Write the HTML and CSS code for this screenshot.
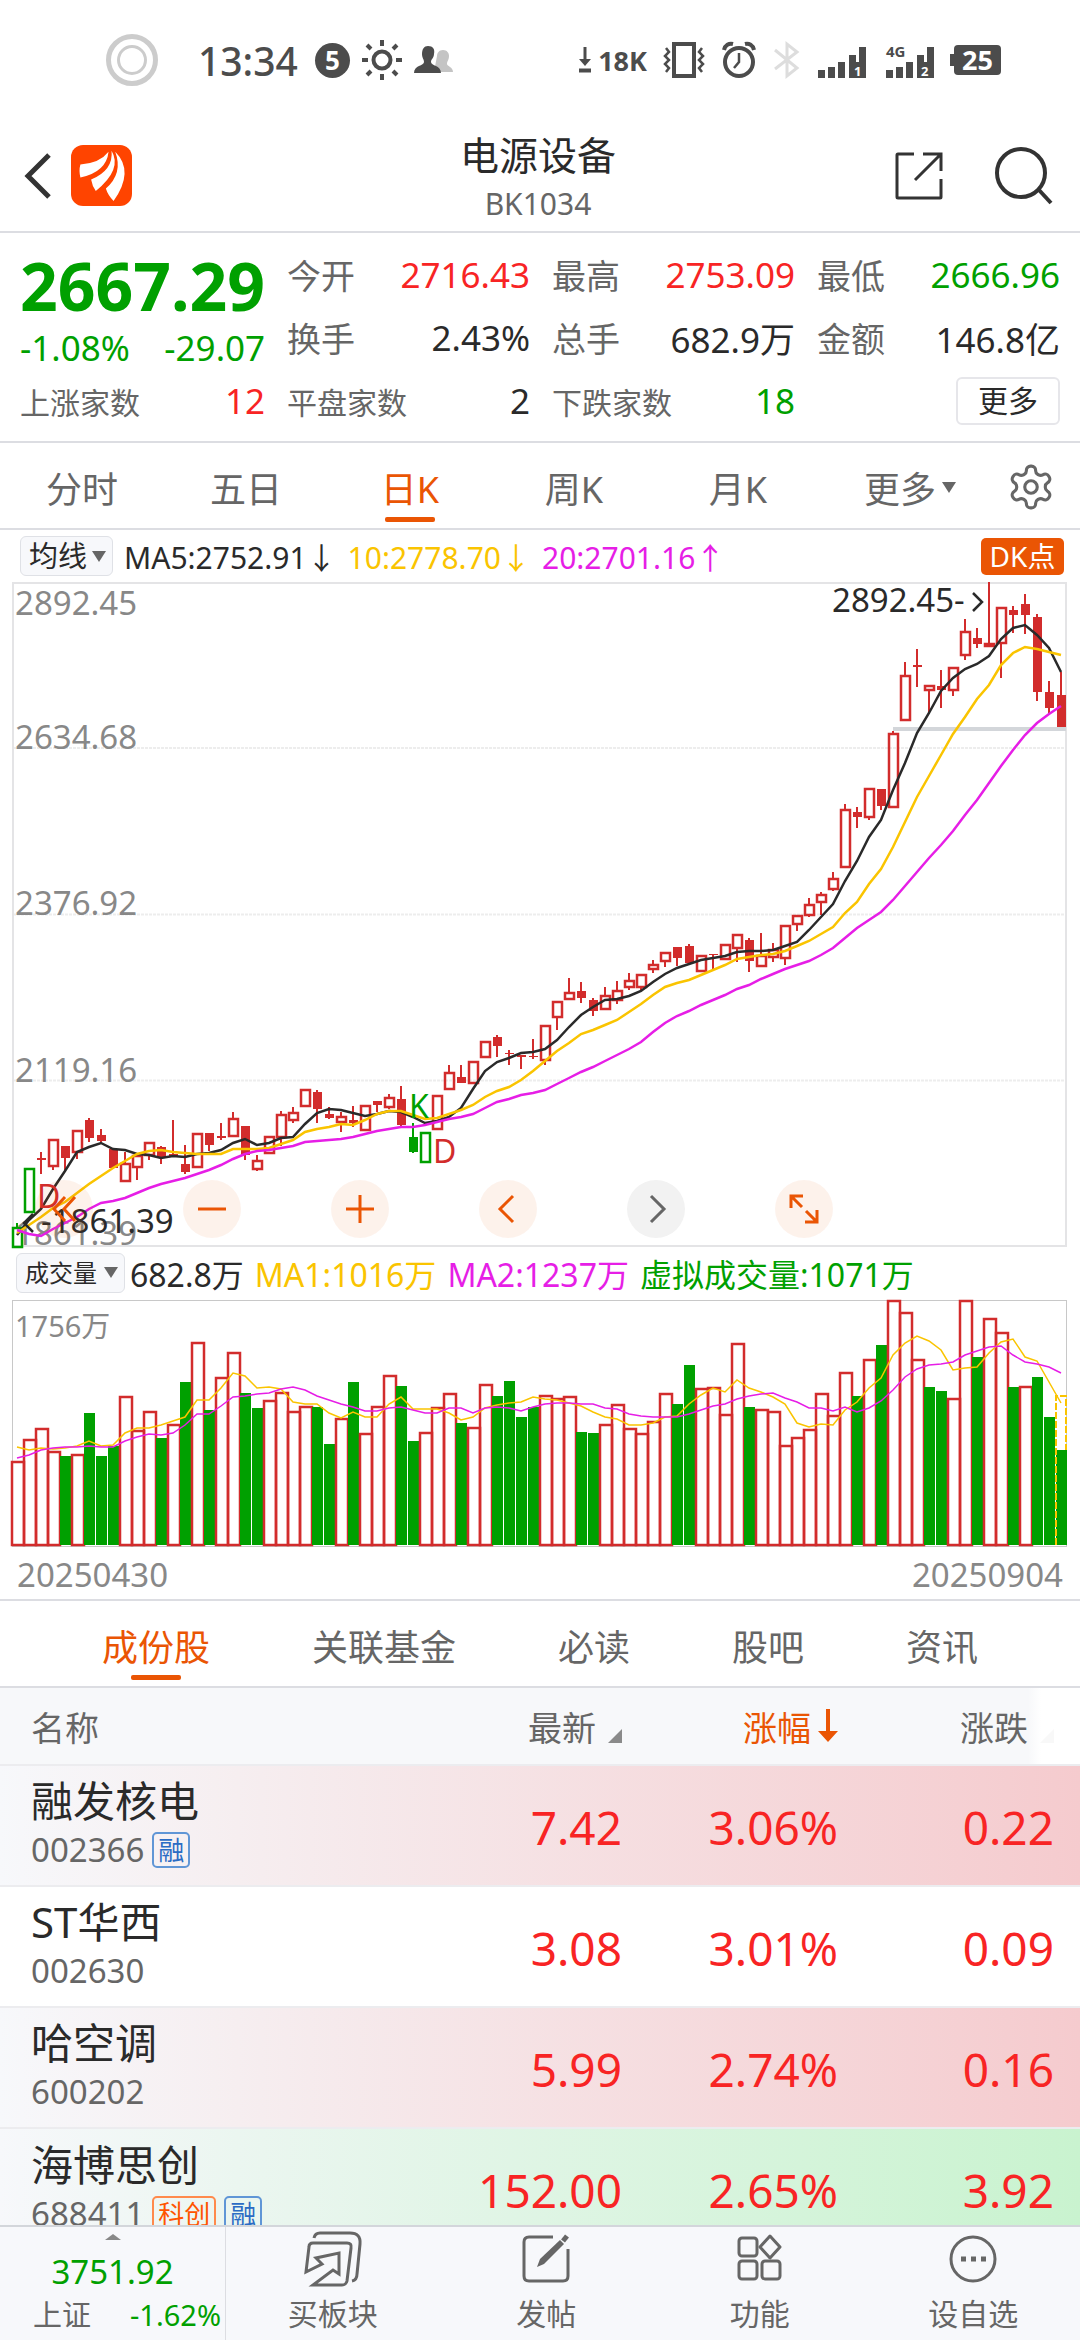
FILE: index.html
```html
<!DOCTYPE html>
<html lang="zh-CN">
<head>
    <meta charset="UTF-8">
    <meta name="viewport" content="width=device-width, initial-scale=1.0">
    <title>电源设备 BK1034</title>
    <link rel="stylesheet" href="styles.css">
</head>
<body>
    <div class="status-bar">
        <div class="status-left">
            <svg class="rings" width="52" height="52" viewBox="0 0 52 52" fill="none" stroke="#ccc"><circle cx="26" cy="26" r="23.5" stroke-width="5"/><circle cx="26" cy="26" r="13.5" stroke-width="3"/></svg>
            <span class="clock">13:34</span>
            <span class="count">5</span>
            <svg width="40" height="40" viewBox="0 0 40 40" fill="none" stroke="#4c4c4c" stroke-width="4"><circle cx="20" cy="20" r="8.5"/><path d="M20 0v6M20 34v6M0 20h6M34 20h6M5 5l4 4M31 31l4 4M5 35l4-4M31 9l4-4"/></svg>
            <svg width="40" height="28" viewBox="0 0 40 28"><path d="M29 4c4 0 6 3 6 6 0 4-2 5-2 8 0 2 6 3 6 8H20l3-16c0-3 2-6 6-6z" fill="#c4c4c4"/><path d="M14 0c5 0 7 3 6 8 0 4-3 5-3 8 0 4 10 3 10 11H0c0-8 10-7 10-11 0-3-2-4-2-8 0-5 2-8 6-8z" fill="#4c4c4c"/></svg>
        </div>
        <div class="status-right">
            <svg width="12" height="26" viewBox="0 0 12 26" fill="none" stroke="#4c4c4c"><path d="M6 0v14" stroke-width="3"/><path d="M0 12l6 7 6-7z" fill="#4c4c4c" stroke="none"/><path d="M0 23.500h12" stroke-width="4"/></svg>
            <span class="speed">18K</span>
            <svg class="vibrate" width="40" height="36" viewBox="0 0 40 36" fill="none" stroke="#4c4c4c"><path d="M10 2h20v32H10z" stroke-width="4"/><path d="M2 6l3 4-4 4 4 4-4 4 4 4-3 4M38 6l-3 4 4 4-4 4 4 4-4 4 3 4" stroke-width="2.500"/></svg>
            <svg class="alarm" width="34" height="36" viewBox="0 0 34 36" fill="none" stroke="#4c4c4c"><circle cx="17" cy="20" r="14" stroke-width="4"/><path d="M17 11v9l-5 6" stroke-width="2.500"/><path d="M2 8c1-5 5-7 9-6M32 8c-1-5-5-7-9-6" stroke-width="4"/></svg>
            <svg class="bluetooth" width="26" height="36" viewBox="0 0 26 36" fill="none" stroke="#ddd" stroke-width="3"><path d="M1 8l22 18-10 8V2l10 8L1 27"/></svg>
            <svg class="signal" width="48" height="38" viewBox="0 0 48 38" fill="#4c4c4c"><path d="M0 29h7v8H0zM10 26h7v11h-7zM20 21h7v16h-7zM31 14h7v7h3V6h7v31H31z"/><text x="36" y="35" class="sim">1</text></svg>
            <svg class="signal" width="48" height="38" viewBox="0 0 48 38" fill="#4c4c4c"><path d="M0 29h7v8H0zM10 26h7v11h-7zM20 21h7v16h-7zM31 14h7v7h3V6h7v31H31z"/><text x="35" y="35" class="sim">2</text><text x="0" y="16" class="net">4G</text></svg>
            <span class="battery">25</span>
        </div>
    </div>

    <header class="header">
        <div class="header-left">
            <button class="icon-button" aria-label="返回"><svg width="28" height="46" viewBox="0 0 28 46" fill="none" stroke="#333" stroke-width="5"><path d="M25 2L4 23l21 21"/></svg></button>
            <a href="#" class="logo" aria-label="首页"><svg width="61" height="61" viewBox="0 0 182 182"><rect width="182" height="182" rx="36" fill="#ff4400"/><g fill="#fff"><path d="M28 58Q86 54 112 20Q106 80 28 97Q23 76 28 58z"/><path d="M121 17Q154 72 74 137Q63 122 60 103Q127 75 121 17z"/><path d="M132 20Q190 78 127 167Q110 150 104 130Q156 84 132 20z"/></g></svg></a>
        </div>
        <div class="header-title">
            <h1>电源设备</h1>
            <p>BK1034</p>
        </div>
        <div class="header-right">
            <button class="icon-button" aria-label="分享"><svg width="50" height="50" viewBox="0 0 50 50" fill="none" stroke="#333" stroke-width="3"><path d="M20 3H4q-1 0-1 1v42q0 1 1 1h42q1 0 1-1V28M29 3h18v17M47 3L21 29"/></svg></button>
            <button class="icon-button" aria-label="搜索"><svg width="58" height="58" viewBox="0 0 58 58" fill="none" stroke="#333" stroke-width="4"><circle cx="27" cy="26" r="24"/><path d="M45 43l12 13"/></svg></button>
        </div>
    </header>

    <section class="quote">
        <div class="quote-main">
            <strong class="price">2667.29</strong>
            <div class="change"><span>-1.08%</span><span>-29.07</span></div>
        </div>
        <div class="stat"><span>今开</span><b class="up">2716.43</b></div>
        <div class="stat"><span>最高</span><b class="up">2753.09</b></div>
        <div class="stat"><span>最低</span><b class="down">2666.96</b></div>
        <div class="stat"><span>换手</span><b>2.43%</b></div>
        <div class="stat"><span>总手</span><b>682.9万</b></div>
        <div class="stat"><span>金额</span><b>146.8亿</b></div>
        <div class="stat small"><span>上涨家数</span><b class="up">12</b></div>
        <div class="stat small"><span>平盘家数</span><b>2</b></div>
        <div class="stat small"><span>下跌家数</span><b class="down">18</b></div>
        <div class="stat more"><button class="more-button">更多</button></div>
    </section>

    <nav class="period-tabs">
        <button class="tab">分时</button>
        <button class="tab">五日</button>
        <button class="tab active">日K</button>
        <button class="tab">周K</button>
        <button class="tab">月K</button>
        <button class="tab tab-more">更多<i class="caret"></i></button>
        <button class="tab tab-gear" aria-label="设置"><svg width="50" height="50" viewBox="0 0 24 24" fill="none" stroke="#666" stroke-width="1.500"><path d="M12.220 2h-.44a2 2 0 0 0-2 2v.18a2 2 0 0 1-1 1.730l-.43.25a2 2 0 0 1-2 0l-.15-.08a2 2 0 0 0-2.730.73l-.22.38a2 2 0 0 0 .73 2.730l.15.1a2 2 0 0 1 1 1.720v.51a2 2 0 0 1-1 1.740l-.15.09a2 2 0 0 0-.73 2.730l.22.38a2 2 0 0 0 2.730.73l.15-.08a2 2 0 0 1 2 0l.43.25a2 2 0 0 1 1 1.730V20a2 2 0 0 0 2 2h.44a2 2 0 0 0 2-2v-.18a2 2 0 0 1 1-1.730l.43-.25a2 2 0 0 1 2 0l.15.08a2 2 0 0 0 2.730-.73l.22-.39a2 2 0 0 0-.73-2.730l-.15-.08a2 2 0 0 1-1-1.740v-.5a2 2 0 0 1 1-1.740l.15-.09a2 2 0 0 0 .73-2.730l-.22-.38a2 2 0 0 0-2.730-.73l-.15.08a2 2 0 0 1-2 0l-.43-.25a2 2 0 0 1-1-1.730V4a2 2 0 0 0-2-2z"/><circle cx="12" cy="12" r="3"/></svg></button>
    </nav>

    <section class="charts">
        <div class="legend">
            <label class="picker"><select aria-label="主图指标"><option>均线</option></select><i class="caret"></i></label>
            <span class="ma5">MA5:2752.91↓</span>
            <span class="ma10">10:2778.70↓</span>
            <span class="ma20">20:2701.16↑</span>
            <button class="dk-button">DK点</button>
        </div>
        <div class="k-chart">
            <svg id="k-chart" viewBox="13 582 1054 665"></svg>
            <div class="chart-tools">
                <button class="tool" aria-label="最早"><svg width="30" height="30" viewBox="0 0 30 30"><path d="M16 3L5 15l11 12M26 3L15 15l11 12"/></svg></button>
                <button class="tool" aria-label="缩小"><svg width="30" height="30" viewBox="0 0 30 30"><path d="M1 15h28"/></svg></button>
                <button class="tool" aria-label="放大"><svg width="30" height="30" viewBox="0 0 30 30"><path d="M1 15h28M15 1v28"/></svg></button>
                <button class="tool" aria-label="左移"><svg width="30" height="30" viewBox="0 0 30 30"><path d="M20 2L7 15l13 13"/></svg></button>
                <button class="tool gray" aria-label="右移"><svg width="30" height="30" viewBox="0 0 30 30"><path d="M10 2l13 13-13 13"/></svg></button>
                <button class="tool" aria-label="全屏"><svg width="30" height="30" viewBox="0 0 30 30"><path d="M2 14V2h12M2 2l11 11M28 16v12H16M28 28L17 17"/></svg></button>
            </div>
        </div>
        <div class="legend legend-volume">
            <label class="picker"><select aria-label="副图指标"><option>成交量</option></select><i class="caret"></i></label>
            <span>682.8万</span>
            <span class="ma10">MA1:1016万</span>
            <span class="ma20">MA2:1237万</span>
            <span class="down">虚拟成交量:1071万</span>
        </div>
        <svg id="volume-chart" viewBox="13 1300 1054 247"></svg>
        <div class="dates"><span>20250430</span><span>20250904</span></div>
    </section>

    <nav class="info-tabs">
        <button class="tab active">成份股</button>
        <button class="tab">关联基金</button>
        <button class="tab">必读</button>
        <button class="tab">股吧</button>
        <button class="tab">资讯</button>
    </nav>

    <main class="list">
        <table class="stocks">
            <thead>
                <tr>
                    <th>名称</th>
                    <th><span>最新<i class="corner"></i></span></th>
                    <th class="sorted"><span>涨幅<svg width="20" height="34" viewBox="0 0 20 34"><path d="M8 0h4v22h8L10 33 0 22h8z"/></svg></span></th>
                    <th class="faded"><span>涨跌<i class="corner"></i></span></th>
                </tr>
            </thead>
            <tbody>
                <tr class="rise">
                    <td><div class="name">融发核电</div><div class="code">002366<em>融</em></div></td>
                    <td>7.42</td><td>3.06%</td><td>0.22</td>
                </tr>
                <tr>
                    <td><div class="name">ST华西</div><div class="code">002630</div></td>
                    <td>3.08</td><td>3.01%</td><td>0.09</td>
                </tr>
                <tr class="rise">
                    <td><div class="name">哈空调</div><div class="code">600202</div></td>
                    <td>5.99</td><td>2.74%</td><td>0.16</td>
                </tr>
                <tr class="fall">
                    <td><div class="name">海博思创</div><div class="code">688411<em class="star">科创</em><em>融</em></div></td>
                    <td>152.00</td><td>2.65%</td><td>3.92</td>
                </tr>
            </tbody>
        </table>
    </main>

    <footer class="bottom-bar">
        <button class="index">
            <i class="caret-up"></i>
            <span class="index-value">3751.92</span>
            <span class="index-row"><span>上证</span><span class="down">-1.62%</span></span>
        </button>
        <a href="#" class="action">
            <svg width="62" height="56" viewBox="0 0 62 56"><path d="M4 41L7 16q0-4 4-4h34q5 0 4 5l-4 33q-1 4-5 4H11l20-15 6 4V22l-23 5 6 6z"/><path d="M12 7q1-5 6-5h30q11 0 10 11l-3 30q0 6-5 7"/></svg>
            买板块
        </a>
        <a href="#" class="action">
            <svg width="50" height="56" viewBox="0 0 50 56"><path d="M32 6H8q-5 0-5 5v34q0 5 5 5h34q5 0 5-5V18"/><path d="M16 36l3-8L39 9l4 4-20 20z" fill="#666" stroke="none"/><path d="M42 10l4-5" stroke-width="5"/></svg>
            发帖
        </a>
        <a href="#" class="action">
            <svg width="50" height="56" viewBox="0 0 50 56"><rect x="4" y="7" width="18" height="18" rx="3"/><path d="M35 5l10 11-10 11-10-11z" stroke-linejoin="round"/><rect x="4" y="30" width="18" height="18" rx="3"/><rect x="27" y="30" width="18" height="18" rx="3"/></svg>
            功能
        </a>
        <a href="#" class="action">
            <svg width="50" height="56" viewBox="0 0 50 56"><circle cx="25" cy="28" r="22"/><path d="M13 28h5M23 28h5M33 28h5" stroke-width="5"/></svg>
            设自选
        </a>
    </footer>
    <script src="script.js"></script>
</body>
</html>
```
FILE: styles.css
```css
* {
    box-sizing: border-box;
}
body {
    margin: 0;
    height: 100vh;
    display: flex;
    flex-direction: column;
    overflow: hidden;
    background-color: #fff;
    color: #2a2a2a;
    font-family: "Noto Sans", "Noto Sans CJK SC", sans-serif;
    font-size: 34px;
}
button, select {
    font-family: inherit;
    border: none;
    background: none;
    padding: 0;
    margin: 0;
    color: inherit;
    cursor: pointer;
}
a {
    color: inherit;
    text-decoration: none;
}
svg {
    display: block;
    flex-shrink: 0;
    overflow: visible;
}
.up {
    color: #f82424;
}
.down {
    color: #00a000;
}
.caret {
    display: inline-block;
    border: 7px solid transparent;
    border-top: 11px solid #666;
    border-bottom: none;
}

/* status bar */
.status-bar {
    display: flex;
    justify-content: space-between;
    align-items: center;
    height: 120px;
    flex-shrink: 0;
    padding: 0 79px 0 106px;
    color: #4c4c4c;
}
.status-left, .status-right {
    display: flex;
    align-items: center;
}
.status-left {
    gap: 12px;
}
.rings {
    margin-right: 28px;
}
.clock {
    font-size: 39px;
    font-weight: 500;
    margin-right: 5px;
}
.count {
    width: 35px;
    height: 35px;
    border-radius: 50%;
    background-color: #4c4c4c;
    color: #fff;
    font-size: 26px;
    font-weight: bold;
    line-height: 35px;
    text-align: center;
}
.speed {
    font-size: 27px;
    font-weight: bold;
    margin: 0 17px 0 7px;
}
.vibrate, .alarm, .bluetooth {
    margin-right: 18px;
}
.signal {
    margin-right: 20px;
}
.sim {
    fill: #fff;
    font-size: 13px;
    font-weight: bold;
}
.net {
    font-size: 15px;
    font-weight: bold;
}
.battery {
    position: relative;
    width: 47px;
    height: 30px;
    border-radius: 4px;
    background-color: #4c4c4c;
    color: #fff;
    font-size: 27px;
    font-weight: bold;
    line-height: 30px;
    text-align: center;
}
.battery::before {
    content: "";
    position: absolute;
    left: -4px;
    top: 9px;
    width: 4px;
    height: 12px;
    background-color: #4c4c4c;
}

/* header */
.header {
    display: grid;
    grid-template-columns: 1fr auto 1fr;
    align-items: center;
    height: 113px;
    flex-shrink: 0;
    padding: 0 28px 0 24px;
    border-bottom: 2px solid #dcdde2;
}
.header-left, .header-right {
    display: flex;
    align-items: center;
}
.header-left {
    gap: 19px;
}
.header-right {
    justify-content: flex-end;
    gap: 50px;
}
.header-title {
    padding-top: 6px;
    text-align: center;
}
.header-title h1 {
    margin: 0;
    font-size: 39px;
    font-weight: normal;
    line-height: 50px;
}
.header-title p {
    margin: 0;
    font-size: 30px;
    line-height: 48px;
    color: #666;
}

/* quote numbers */
.quote {
    display: grid;
    grid-template-columns: repeat(4, 1fr);
    grid-template-rows: repeat(3, 63px);
    column-gap: 22px;
    padding: 10px 20px 9px;
    flex-shrink: 0;
    border-bottom: 2px solid #dcdde2;
}
.quote-main {
    grid-row: span 2;
    color: #00a000;
}
.price {
    display: block;
    font-size: 66px;
    line-height: 84px;
}
.change {
    display: flex;
    justify-content: space-between;
    font-size: 35px;
    line-height: 42px;
}
.stat {
    display: flex;
    justify-content: space-between;
    align-items: center;
}
.stat span {
    color: #666;
}
.stat b {
    font-size: 35px;
    font-weight: normal;
}
.stat.small span {
    font-size: 30px;
}
.stat.more {
    justify-content: flex-end;
}
.more-button {
    width: 104px;
    height: 48px;
    font-size: 30px;
    line-height: 44px;
    border: 2px solid #e6e6ea;
    border-radius: 6px;
}

/* tabs */
.period-tabs, .info-tabs {
    display: flex;
    height: 87px;
    flex-shrink: 0;
    border-bottom: 2px solid #dcdde2;
}
.period-tabs {
    padding-right: 18px;
}
.info-tabs {
    justify-content: space-evenly;
    border-top: 2px solid #dcdde2;
    height: 89px;
}
.tab {
    position: relative;
    font-size: 36px;
    color: #666;
    padding-top: 3px;
}
.period-tabs .tab {
    flex: 164;
}
.period-tabs .tab-more {
    display: flex;
    flex: 180;
    justify-content: center;
    align-items: center;
    gap: 6px;
}
.period-tabs .tab-gear {
    display: flex;
    flex: 62;
    justify-content: center;
    align-items: center;
}
.tab.active {
    color: #ea5504;
}
.tab.active::after {
    content: "";
    position: absolute;
    left: 50%;
    bottom: 6px;
    width: 50px;
    height: 5px;
    margin-left: -25px;
    border-radius: 2px;
    background-color: #ea5504;
}

/* charts */
.charts {
    flex-shrink: 0;
    padding: 0 13px;
}
.legend {
    display: flex;
    align-items: center;
    gap: 11px;
    height: 52px;
    padding: 0 3px 0 7px;
    font-size: 30px;
    white-space: nowrap;
}
.legend-volume {
    height: 53px;
    padding-left: 3px;
    padding-bottom: 2px;
    font-size: 32px;
}
.picker {
    display: flex;
    align-items: center;
    gap: 4px;
    height: 40px;
    padding: 0 6px 0 8px;
    border: 1px solid #dfe1e6;
    border-radius: 6px;
    background-color: #f7f8fb;
}
.picker select {
    appearance: none;
    font-size: 29px;
    line-height: 38px;
}
.legend-volume .picker {
    gap: 7px;
    margin-right: -6px;
}
.legend-volume .picker select {
    font-size: 24px;
}
.ma10 {
    color: #fac400;
}
.ma20 {
    color: #e61ee6;
}
.dk-button {
    margin-left: auto;
    width: 83px;
    height: 37px;
    border-radius: 5px;
    background-color: #ea5504;
    color: #fff;
    font-size: 28px;
    line-height: 37px;
}
.k-chart {
    position: relative;
}
#k-chart, #volume-chart {
    width: 100%;
    height: auto;
}
#k-chart text, #volume-chart text {
    font-size: 33px;
}
#k-chart .mark {
    font-size: 32px;
}
#volume-chart .axis {
    font-size: 29px;
}
.axis {
    fill: #888;
}
.chart-tools {
    position: absolute;
    left: 22px;
    bottom: 9px;
    display: flex;
    gap: 90px;
}
.tool {
    display: flex;
    align-items: center;
    justify-content: center;
    width: 58px;
    height: 58px;
    border-radius: 50%;
    background-color: rgba(234, 85, 4, 0.08);
}
.tool path {
    fill: none;
    stroke: #ea5504;
    stroke-width: 3;
}
.tool.gray {
    background-color: #f2f2f2;
}
.tool.gray path {
    stroke: #666;
}
.dates {
    display: flex;
    justify-content: space-between;
    padding: 4px 4px 0;
    font-size: 33px;
    line-height: 48px;
    color: #888;
}

/* stock table */
.list {
    flex: 1;
    min-height: 0;
    overflow: hidden;
}
.stocks {
    width: 100%;
    border-collapse: collapse;
    table-layout: fixed;
}
.stocks th {
    height: 77px;
    width: 20%;
    padding: 0 26px 0 0;
    background-color: #f7f8fa;
    color: #666;
    font-weight: normal;
    text-align: right;
}
.stocks th:first-child {
    width: 40%;
    padding-left: 31px;
    text-align: left;
}
.stocks th span {
    display: flex;
    justify-content: flex-end;
    align-items: center;
    gap: 7px;
}
.stocks th.sorted {
    color: #ea5504;
    fill: #ea5504;
}
.stocks th.faded {
    background: linear-gradient(to right, #f7f8fa 76%, #fff 82%);
}
.corner {
    margin-left: 5px;
    margin-top: 20px;
    border-left: 14px solid transparent;
    border-bottom: 14px solid #8a8a8a;
}
.faded .corner {
    border-bottom-color: #f8f8f8;
}
.stocks td {
    height: 121px;
    padding: 2px 26px 0 0;
    border-top: 2px solid #ececef;
    color: #f82424;
    font-size: 46px;
    text-align: right;
}
.stocks td:first-child {
    padding: 0 0 9px 31px;
    text-align: left;
}
.rise {
    background: linear-gradient(to right, #f7f8fb, #f6eef0 22%, #f5cbce);
}
.fall {
    background: linear-gradient(to right, #f7f8fb, #ebf6f0 22%, #c9f3cf);
}
.name {
    color: #2a2a2a;
    font-size: 42px;
    line-height: 58px;
}
.code {
    display: flex;
    align-items: center;
    gap: 8px;
    color: #666;
    font-size: 33px;
    line-height: 40px;
}
.code em {
    padding: 0 4px;
    border: 2px solid #6096d6;
    border-radius: 5px;
    color: #2b6cc4;
    font-size: 26px;
    font-style: normal;
    line-height: 32px;
}
.code .star {
    border-color: #ff8a4c;
    color: #ff5500;
}

/* bottom bar */
.bottom-bar {
    display: flex;
    height: 115px;
    flex-shrink: 0;
    border-top: 2px solid #d3d6db;
    background-color: #f7f8fb;
    color: #666;
    font-size: 30px;
}
.index {
    display: flex;
    flex-direction: column;
    align-items: center;
    width: 226px;
    padding: 7px 4px 0 33px;
    border-right: 1px solid #dcdde2;
}
.caret-up {
    border: 8px solid transparent;
    border-top: none;
    border-bottom: 6px solid #888;
    margin-right: 29px;
}
.index-value {
    margin-right: 29px;
    color: #00a000;
    font-size: 33px;
    line-height: 64px;
}
.index-row {
    display: flex;
    justify-content: space-between;
    width: 100%;
    font-size: 29px;
    line-height: 22px;
}
.action {
    flex: 1;
    display: flex;
    flex-direction: column;
    align-items: center;
    padding-top: 4px;
    line-height: 54px;
}
.action svg {
    fill: none;
    stroke: #666;
    stroke-width: 3;
}
```
FILE: script.js
```js
const RED = '#d22c2c';
const GREEN = '#00a000';
const STEP = 12;
const FIRST = 17;

// kind (r hollow red, f filled red, g hollow green, G filled green), body top, body bottom, high, low
const candles = `g 1227 1247 1223 1247|g 1168 1212|f 1158 1160 1152 1174|r 1139 1166 1139 1170|f 1146 1158 1146 1170|r 1130 1152 1130 1159
f 1120 1138 1118 1142|f 1135 1141 1129 1142|f 1149 1168|r 1163 1181 1152 1181|r 1155 1167 1155 1180|r 1142 1155 1142 1160
f 1147 1158 1146 1164|f 1154 1156 1120 1156|f 1164 1172 1145 1174|r 1133 1167|f 1133 1145 1133 1151|f 1136 1138 1123 1140
r 1118 1136 1112 1136|f 1126 1155 1126 1160|r 1160 1169 1155 1171|r 1136 1153|r 1114 1137 1111 1146|r 1112 1120 1107 1123
r 1089 1106|f 1092 1109 1090 1123|f 1114 1118 1107 1119|r 1116 1122 1112 1132|f 1120 1123 1106 1127|r 1105 1130
f 1101 1105 1101 1112|r 1097 1107 1094 1109|f 1099 1125 1086 1128|G 1137 1152 1123 1153|g 1132 1162|r 1095 1129
r 1072 1089 1065 1089|f 1077 1083 1065 1083|r 1061 1083|r 1041 1057|f 1037 1046 1035 1057|f 1053 1054 1050 1065
f 1055 1057 1055 1069|f 1056 1057 1039 1059|r 1025 1060 1025 1065|r 1001 1017 1001 1030|r 992 999 978 999|f 991 998 982 1003
f 1000 1011 998 1016|r 995 1009 987 1009|r 990 1000 981 1004|r 980 987 973 990|r 974 987 974 990|r 964 969 960 973
r 952 961 952 967|f 947 958 947 966|f 946 963 944 963|r 955 971|f 954 955 954 971|r 944 959
r 934 948 934 962|f 940 961 938 972|r 955 966 933 966|r 949 957 943 962|r 925 958 925 965|r 915 924 915 931
r 904 915 898 917|r 894 902 892 915|r 878 889 872 891|r 809 867 804 867|f 812 817 807 828|r 788 817 788 820
f 789 806 789 810|r 733 807 731 807|r 675 720 662 720|f 665 667 649 687|r 685 690 685 713|f 686 690 670 708
r 667 690 667 696|r 631 655 619 660|f 638 644 628 648|r 643 646 582 646|r 607 643 607 678|f 610 615 606 633
f 604 615 594 634|f 617 692 614 701|f 692 708 681 714|f 695 727 672 727`.split(/[|\n]/).map(row => row.split(' '));

const lines = {
    '#2a2a2a': '1235 1220 1209 1189 1171 1152 1147 1143 1149 1150 1154 1155 1158 1156 1157 1154 1153 1150 1143 1139 1145 1143 1138 1137 1124 1113 1109 1110 1113 1116 1114 1111 1112 1117 1123 1121 1117 1108 1089 1071 1062 1058 1053 1052 1049 1040 1027 1015 1007 1000 999 996 991 982 974 968 964 960 958 956 952 951 951 950 946 942 930 917 904 881 861 837 820 790 763 733 713 691 678 669 664 656 639 628 625 635 648 672',
    '#fac400': '1233 1225 1217 1208 1202 1193 1184 1176 1168 1161 1154 1151 1150 1152 1153 1154 1154 1154 1149 1149 1149 1148 1144 1140 1132 1129 1127 1124 1125 1120 1114 1111 1111 1115 1119 1118 1114 1110 1105 1097 1091 1087 1080 1071 1061 1051 1043 1034 1030 1025 1020 1012 1004 995 987 983 980 975 970 965 959 957 955 954 951 946 941 934 927 913 902 884 869 847 822 797 776 755 734 717 699 685 665 653 647 649 652 655',
    '#e61ee6': '1230 1234 1236 1229 1223 1217 1209 1203 1201 1198 1193 1188 1184 1181 1178 1174 1170 1165 1159 1154 1151 1150 1148 1146 1142 1141 1140 1139 1137 1134 1131 1129 1127 1127 1125 1122 1119 1117 1114 1108 1102 1099 1095 1093 1090 1084 1078 1072 1067 1061 1055 1049 1042 1032 1023 1016 1011 1005 1000 995 989 985 979 974 969 965 961 955 948 938 928 920 912 900 886 872 858 845 831 815 800 783 766 750 735 723 714 706'
};

// bar kind and top
const volumes = `r1462 r1440 r1429 r1452 G1456 r1455 G1413 G1456 G1446 r1397 r1431 r1412 G1438 r1425 G1382 r1343 G1410 r1378 r1353 G1393 G1408 r1401
r1393 r1412 r1407 G1407 G1444 r1419 G1382 r1434 r1407 r1376 G1386 G1441 r1433 r1408 r1394 G1423 r1428 r1385 G1396 G1381 G1417 G1407
r1396 r1399 r1397 G1432 G1433 r1425 r1405 r1429 r1434 r1422 r1394 G1404 G1365 r1389 r1388 r1415 r1344 G1407 r1410 r1412 r1446 r1438
r1430 r1394 r1416 r1373 G1396 r1360 G1345 r1301 r1313 r1360 G1387 G1391 r1399 r1301 G1357 r1319 r1333 G1387 r1387 G1377 G1417 G1450`.split(/\s+/);

const volumeLines = {
    '#fac400': '1447 1450 1448 1449 1448 1446 1441 1446 1445 1433 1428 1428 1425 1421 1417 1400 1400 1388 1373 1376 1388 1387 1389 1402 1404 1404 1413 1418 1412 1417 1417 1404 1397 1409 1409 1409 1413 1420 1417 1408 1405 1403 1402 1397 1399 1400 1403 1406 1412 1417 1419 1425 1425 1423 1417 1416 1404 1395 1388 1392 1380 1388 1392 1397 1404 1423 1427 1424 1425 1410 1402 1388 1378 1355 1343 1336 1341 1350 1370 1368 1367 1353 1342 1339 1357 1361 1382 1403',
    '#e61ee6': '1458 1455 1450 1448 1447 1447 1446 1447 1447 1441 1437 1434 1435 1433 1425 1414 1414 1406 1397 1396 1394 1393 1389 1387 1390 1396 1400 1404 1407 1411 1411 1408 1407 1410 1413 1413 1408 1408 1413 1408 1407 1408 1411 1407 1404 1403 1403 1404 1404 1408 1409 1414 1416 1417 1417 1417 1414 1410 1406 1404 1399 1396 1394 1393 1398 1402 1408 1408 1411 1407 1412 1408 1401 1390 1377 1369 1365 1364 1362 1355 1351 1347 1346 1355 1362 1364 1367 1373'
};

function drawLine(values, color, width) {
    const points = values.split(' ').map((y, i) => `${FIRST + i * STEP},${y}`).join(' ');
    return `<polyline points="${points}" fill="none" stroke="${color}" stroke-width="${width}"/>`;
}

function drawCandle(row, i) {
    const [kind, top, bottom, high, low] = row;
    const x = FIRST + i * STEP;
    const color = kind.toLowerCase() === 'g' ? GREEN : RED;
    let out = '';
    if (high) {
        out += `<path d="M${x} ${high}V${top}M${x} ${bottom}V${low}" stroke="${color}" stroke-width="2"/>`;
    }
    if (kind === 'f' || kind === 'G') {
        out += `<rect x="${x - 4}" y="${top}" width="9" height="${bottom - top}" fill="${color}"/>`;
    } else {
        out += `<rect x="${x - 4}" y="${+top + 1}" width="9" height="${Math.max(bottom - top - 1, 2)}" fill="none" stroke="${color}" stroke-width="2.5"/>`;
    }
    return out;
}

function drawKChart() {
    let out = '<path d="M13 748H1066M13 914.5H1066M13 1080.5H1066" stroke="#ededed" stroke-width="2" stroke-dasharray="3 1"/>';
    out += '<rect x="13" y="583" width="1053" height="663" fill="none" stroke="#e4e4e6" stroke-width="2"/>';
    [['2892.45', 615], ['2634.68', 749], ['2376.92', 915], ['2119.16', 1082], ['1861.39', 1245]].forEach(([label, y]) => {
        out += `<text class="axis" x="15" y="${y}">${label}</text>`;
    });
    out += '<rect x="893" y="727" width="173" height="4" fill="#d3d6da"/>';
    out += candles.map(drawCandle).join('');
    for (const color in lines) {
        out += drawLine(lines[color], color, 2.5);
    }
    out += `<text class="mark" x="409" y="1118" fill="${GREEN}">K</text>`;
    out += `<text class="mark" x="433" y="1163" fill="${RED}">D</text>`;
    out += `<text class="mark" x="37" y="1208" fill="${RED}">D</text>`;
    out += '<text x="832" y="612" fill="#2a2a2a">2892.45-</text><path d="M973 593l9 9-9 9" fill="none" stroke="#2a2a2a" stroke-width="2.5"/>';
    out += '<text x="41" y="1233" fill="#2a2a2a">-1861.39</text><path d="M33 1214l-9 9 9 9" fill="none" stroke="#2a2a2a" stroke-width="2.5"/>';
    document.getElementById('k-chart').innerHTML = out;
}

function drawVolumeChart() {
    let out = '<rect x="12.5" y="1300.5" width="1054" height="246" fill="none" stroke="#c8c8c8"/>';
    out += '<text class="axis" x="15" y="1337">1756万</text>';
    volumes.forEach((bar, i) => {
        const x = FIRST + i * STEP;
        const top = +bar.slice(1);
        if (bar[0] === 'G') {
            out += `<rect x="${x - 5}" y="${top}" width="11" height="${1545 - top}" fill="${GREEN}"/>`;
        } else {
            out += `<rect x="${x - 5}" y="${top}" width="12" height="${1545 - top}" fill="none" stroke="${RED}" stroke-width="2.5"/>`;
        }
    });
    out += '<path d="M1056 1545V1396H1066V1450" fill="none" stroke="#fac400" stroke-width="2" stroke-dasharray="7 2"/>';
    for (const color in volumeLines) {
        out += drawLine(volumeLines[color], color, 1.5);
    }
    document.getElementById('volume-chart').innerHTML = out;
}

drawKChart();
drawVolumeChart();
```
